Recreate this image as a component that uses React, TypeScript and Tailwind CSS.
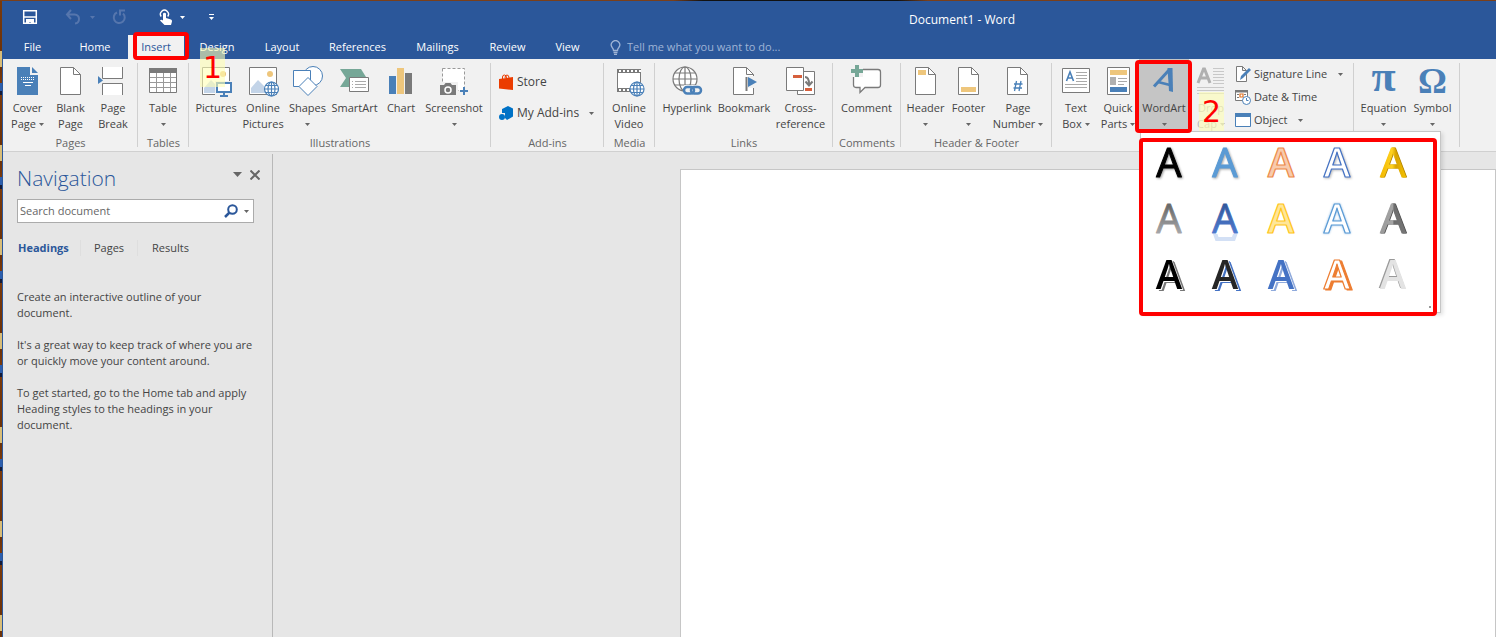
import type { ReactNode } from "react";

const BLUE = "#4a80b8";
const GRAY = "#7a7a7a";
const TAN = "#eec67c";
const GREEN = "#76a797";

function Caret({ className = "" }: Readonly<{ className?: string }>) {
  return (
    <svg viewBox="0 0 5 3" className={`inline-block h-[3px] w-[5px] shrink-0 ${className}`} aria-hidden="true">
      <path d="M0 0h5L2.5 3z" fill="currentColor" />
    </svg>
  );
}

function Icon({ children }: Readonly<{ children: ReactNode }>) {
  return (
    <svg viewBox="0 0 32 32" className="h-8 w-8 shrink-0" fill="none" aria-hidden="true">
      {children}
    </svg>
  );
}

function SmallIcon({ children }: Readonly<{ children: ReactNode }>) {
  return (
    <svg viewBox="0 0 16 16" className="h-4 w-4 shrink-0" fill="none" aria-hidden="true">
      {children}
    </svg>
  );
}

function Sheet({ children }: Readonly<{ children?: ReactNode }>) {
  return (
    <>
      <path d="M5.5 2.5h13l7 7v20h-20z" fill="#fff" stroke={GRAY} />
      <path d="M18.5 2.5v7h7" stroke={GRAY} />
      {children}
    </>
  );
}

function Globe({ cx, cy, r, color }: Readonly<{ cx: number; cy: number; r: number; color: string }>) {
  return (
    <g stroke={color} strokeWidth="1.2">
      <circle cx={cx} cy={cy} r={r} fill="#fff" />
      <ellipse cx={cx} cy={cy} rx={r / 2} ry={r} />
      <path d={`M${cx - r} ${cy}h${2 * r}M${cx} ${cy - r}v${2 * r}`} />
      <path d={`M${cx - r * 0.85} ${cy - r / 2}h${1.7 * r}M${cx - r * 0.85} ${cy + r / 2}h${1.7 * r}`} />
    </g>
  );
}

function Photo() {
  return (
    <>
      <path d="M2.5 2.5h27v27h-27z" fill="#fff" stroke={GRAY} />
      <circle cx="23" cy="9" r="3" fill={TAN} />
      <path d="M4 28v-5l7-8 5 5 3 3v5z" fill="#c3d4e8" />
    </>
  );
}

type RibbonButtonProps = {
  icon: ReactNode;
  lines: string[];
  width: string;
  caret?: boolean;
  disabled?: boolean;
};

function RibbonButton({ icon, lines, width, caret, disabled }: Readonly<RibbonButtonProps>) {
  return (
    <button
      type="button"
      disabled={disabled}
      className={`flex shrink-0 flex-col items-center whitespace-nowrap pt-1.5 leading-4 ${width} ${disabled ? "text-[#b5b5b5]" : "text-[#444]"}`}
    >
      {icon}
      <span className="mt-[3px] block">{lines[0]}</span>
      <span className="flex h-4 items-center gap-[3px]">
        {lines[1]}
        {caret && <Caret className={disabled ? "text-[#b5b5b5]" : "text-[#666]"} />}
      </span>
    </button>
  );
}

type GroupProps = {
  label: string;
  width: string;
  hideLabel?: boolean;
  children: ReactNode;
};

function Group({ label, width, hideLabel, children }: Readonly<GroupProps>) {
  return (
    <section
      aria-label={label}
      className={`relative flex shrink-0 flex-col after:absolute after:right-0 after:top-1 after:bottom-1 after:w-px after:bg-[#d0d0d0] ${width}`}
    >
      <div className="flex h-[76px] px-[3px]">{children}</div>
      {!hideLabel && <div className="h-4 text-center leading-4 text-[#666]">{label}</div>}
    </section>
  );
}

function Callout({ className, children }: Readonly<{ className: string; children: ReactNode }>) {
  return (
    <span
      className={`pointer-events-none absolute z-30 flex h-[39px] w-[25px] items-center justify-center bg-[#ffffb4]/60 font-['DejaVu_Sans',sans-serif] text-3xl text-[#f00] ${className}`}
    >
      {children}
    </span>
  );
}

const tabs = [
  { name: "File", width: "w-[59px]" },
  { name: "Home", width: "w-[66px]" },
  { name: "Insert", width: "w-[56px]" },
  { name: "Design", width: "w-[66px]" },
  { name: "Layout", width: "w-[64px]" },
  { name: "References", width: "w-[87px]" },
  { name: "Mailings", width: "w-[73px]" },
  { name: "Review", width: "w-[67px]" },
  { name: "View", width: "w-[53px]" },
];

function TitleBar() {
  return (
    <header className="flex h-[34px] items-center text-white">
      <div className="flex w-[260px] shrink-0 items-center pb-0.5 pl-[19px]">
        <button type="button" aria-label="Save">
          <SmallIcon>
            <path d="M1.7 1.7h12.6v12.6H1.7z" stroke="#fff" strokeWidth="1.5" />
            <path d="M2 8h12" stroke="#fff" strokeWidth="1.5" />
            <path d="M4 15v-5h8v5H9v-2H7v2z" fill="#fff" />
          </SmallIcon>
        </button>
        <button type="button" aria-label="Undo" className="ml-[27px] flex items-center gap-[9px] text-[#5676ad]">
          <SmallIcon>
            <path d="M6 1L2 5.5 6 10M2 5.5h7.5q4.5.5 4.5 4.500t-4 4.500" stroke="currentColor" strokeWidth="2" />
          </SmallIcon>
          <Caret />
        </button>
        <button type="button" aria-label="Repeat" className="ml-4 text-[#5676ad]">
          <SmallIcon>
            <path d="M6 3.5a5.5 5.5 0 1 0 6 1" stroke="currentColor" strokeWidth="2" />
            <path d="M9 6.5V1.5h5" stroke="currentColor" strokeWidth="2" />
          </SmallIcon>
        </button>
        <button type="button" aria-label="Touch/Mouse Mode" className="ml-[31px] flex items-center gap-[6px]">
          <SmallIcon>
            <path d="M3.2 7.5a4 4 0 1 1 6.5 0" stroke="#fff" strokeWidth="1.4" />
            <path d="M5 4.5q1.500-1.500 3 0V9l5 1.500q1.200.5 1 2L13 16H6.500L2 11.500q1-1.500 3 0z" fill="#fff" />
          </SmallIcon>
          <Caret />
        </button>
        <button type="button" aria-label="Customize Quick Access Toolbar" className="ml-6 flex flex-col items-center gap-0.5">
          <span className="h-px w-[5px] bg-white" />
          <Caret />
        </button>
      </div>
      <h1 className="ml-[646px] whitespace-nowrap pt-1 text-xs">Document1 - Word</h1>
    </header>
  );
}

function TabBar() {
  return (
    <nav className="flex h-6 items-stretch text-white" aria-label="Ribbon tabs">
      {tabs.map((tab) => {
        const active = tab.name === "Insert";
        return (
          <div key={tab.name} className={`relative flex shrink-0 ${tab.width}`}>
            <button type="button" className={`flex-1 ${active ? "bg-[#f1f1f1] text-[#2b579a]" : ""}`}>
              {tab.name}
            </button>
            {active && (
              <>
                <span className="pointer-events-none absolute -top-[3px] left-[5px] z-20 h-7 w-14 rounded-[4px] border-4 border-[#f00]" />
                <Callout className="left-[72px] top-[13px]">1</Callout>
              </>
            )}
          </div>
        );
      })}
      <label className="ml-4 flex items-center gap-1.5 text-[#9fb4d6]">
        <svg viewBox="0 0 11 15" className="h-[15px] w-[11px]" fill="none" stroke="currentColor" strokeWidth="1.3" aria-hidden="true">
          <path d="M3.5 10.5q0-1.500-1.300-3a4.200 4.200 0 1 1 6.600 0q-1.300 1.500-1.300 3zM3.500 12.500h4M4 14.300h3" />
        </svg>
        <input
          aria-label="Tell me what you want to do"
          placeholder="Tell me what you want to do..."
          className="w-[200px] bg-transparent outline-none placeholder:text-[#9fb4d6] placeholder:opacity-100"
        />
      </label>
    </nav>
  );
}

type LetterProps = {
  fill: string;
  stroke?: string;
  strokeWidth?: number;
  className?: string;
};

function LetterA({ className = "font-medium", ...rest }: Readonly<LetterProps>) {
  return (
    <text
      x={28}
      y={42}
      textAnchor="middle"
      strokeLinejoin="round"
      className={`font-['Open_Sans','Noto_Sans',sans-serif] text-[40px] ${className}`}
      {...rest}
    >
      A
    </text>
  );
}

const wordArtStyles: { name: string; art: ReactNode }[] = [
  {
    name: "Black, shadow",
    art: <LetterA fill="#000" stroke="#000" strokeWidth={1} className="font-medium [filter:drop-shadow(1px_1px_1px_#999)]" />,
  },
  {
    name: "Blue, shadow",
    art: <LetterA fill="#5b9bd5" stroke="#5b9bd5" strokeWidth={1} className="font-medium [filter:drop-shadow(1px_1px_1px_#aaa)]" />,
  },
  { name: "Orange fill, outline", art: <LetterA fill="#f8cbad" stroke="#ed8a4a" strokeWidth={1.2} className="font-semibold" /> },
  {
    name: "White, blue outline",
    art: <LetterA fill="#fff" stroke="#4472c4" strokeWidth={1.2} className="font-semibold [filter:drop-shadow(1px_1px_1px_#bbb)]" />,
  },
  {
    name: "Gold, bevel",
    art: <LetterA fill="url(#wa-gold)" stroke="url(#wa-gold)" strokeWidth={1} className="font-medium [filter:drop-shadow(1px_0_0_#b88900)]" />,
  },
  { name: "Gray gradient", art: <LetterA fill="url(#wa-gray)" stroke="url(#wa-gray)" strokeWidth={0.8} /> },
  {
    name: "Blue, reflection",
    art: (
      <>
        <LetterA fill="url(#wa-blue)" stroke="url(#wa-blue)" strokeWidth={0.8} />
        <path d="M16 43h4.5l1 3h13.500l1-3H40.500l-2.500 7H18.500z" fill="#d3e0f5" />
      </>
    ),
  },
  { name: "Gold fill, outline", art: <LetterA fill="#ffe699" stroke="#ffc61a" strokeWidth={1.2} className="font-semibold" /> },
  {
    name: "White, light blue outline",
    art: <LetterA fill="#fff" stroke="#5b9bd5" strokeWidth={1.2} className="font-semibold [filter:drop-shadow(0_0_1px_#9cc3e6)]" />,
  },
  {
    name: "Gray, bevel",
    art: <LetterA fill="url(#wa-bevel)" stroke="url(#wa-bevel)" strokeWidth={1} className="font-medium [filter:drop-shadow(1px_0_0_#555)]" />,
  },
  {
    name: "Black, hard shadow",
    art: <LetterA fill="#000" className="font-semibold [filter:drop-shadow(1px_1px_0_#fff)_drop-shadow(2px_1px_0_#777)]" />,
  },
  {
    name: "Black, blue shadow",
    art: <LetterA fill="#262626" className="font-semibold [filter:drop-shadow(1px_1px_0_#fff)_drop-shadow(2px_1px_0_#4472c4)]" />,
  },
  {
    name: "Blue, hard shadow",
    art: <LetterA fill="#4472c4" className="font-semibold [filter:drop-shadow(1px_1px_0_#fff)_drop-shadow(2px_1px_0_#8faadc)]" />,
  },
  {
    name: "White, orange shadow",
    art: <LetterA fill="#fff" stroke="#ed7d31" strokeWidth={1.2} className="font-semibold [filter:drop-shadow(2px_1px_0_#ed7d31)]" />,
  },
  { name: "Light gray, inner shadow", art: <LetterA fill="#e3e3e3" className="font-semibold [filter:drop-shadow(-1px_-1px_0_#999)]" /> },
];

function WordArtGallery() {
  return (
    <div className="absolute left-px top-[72px] z-10 h-[182px] w-[301px] border border-[#c6c6c6] bg-white pt-[3px] shadow-[2px_2px_4px_rgba(0,0,0,0.12)]">
      <svg className="absolute h-0 w-0" aria-hidden="true">
        <defs>
          <linearGradient id="wa-gray" x1="0" y1="0" x2="0" y2="1">
            <stop offset="0.3" stopColor="#6b6b6b" />
            <stop offset="0.9" stopColor="#b4b5b8" />
          </linearGradient>
          <linearGradient id="wa-blue" x1="0" y1="0" x2="0" y2="1">
            <stop offset="0.2" stopColor="#2f5597" />
            <stop offset="0.8" stopColor="#4f7bd0" />
          </linearGradient>
          <linearGradient id="wa-gold">
            <stop offset="0" stopColor="#f3b800" />
            <stop offset="0.45" stopColor="#ffd21f" />
            <stop offset="0.6" stopColor="#d9a300" />
            <stop offset="1" stopColor="#f7c400" />
          </linearGradient>
          <linearGradient id="wa-bevel">
            <stop offset="0" stopColor="#999" />
            <stop offset="0.48" stopColor="#a5a5a5" />
            <stop offset="0.52" stopColor="#6d6d6d" />
            <stop offset="1" stopColor="#777" />
          </linearGradient>
        </defs>
      </svg>
      <div className="grid w-[280px] grid-cols-5">
        {wordArtStyles.map((style) => (
          <button key={style.name} type="button" aria-label={style.name} className="h-14 w-14">
            <svg viewBox="0 0 56 56" className="h-14 w-14">
              {style.art}
            </svg>
          </button>
        ))}
      </div>
      <span className="absolute bottom-1 right-[9px] h-0.5 w-0.5 bg-[#999]" />
      <span className="pointer-events-none absolute -left-0.5 top-1.5 h-[178px] w-[298px] rounded-[4px] border-4 border-[#f00]" />
    </div>
  );
}

function PagesGroup() {
  return (
    <Group label="Pages" width="w-[135px]">
      <RibbonButton
        width="w-[43px]"
        lines={["Cover", "Page"]}
        caret
        icon={
          <Icon>
            <path d="M5 2h13v8h8v20H5z" fill={BLUE} />
            <path d="M20 2l6 6h-6z" fill={BLUE} />
            <path d="M9 12.5h14M9 14.5h14" stroke="#fff" strokeDasharray="1 1" />
            <path d="M11 17.5h10M13 20.5h6" stroke="#fff" />
          </Icon>
        }
      />
      <RibbonButton width="w-[43px]" lines={["Blank", "Page"]} icon={<Icon><Sheet /></Icon>} />
      <RibbonButton
        width="w-[42px]"
        lines={["Page", "Break"]}
        icon={
          <Icon>
            <path d="M5.5 2v11.5h20V2M5.5 30V18.5h20V30" fill="#fff" stroke={GRAY} />
            <path d="M1 11l5 4.5L1 19z" fill={BLUE} />
          </Icon>
        }
      />
    </Group>
  );
}

function IllustrationsGroup() {
  return (
    <Group label="Illustrations" width="w-[302px]">
      <RibbonButton
        width="w-[48px]"
        lines={["Pictures"]}
        icon={
          <Icon>
            <Photo />
            <path d="M15 16h17v14H15z" fill="#f1f1f1" />
            <path d="M17 18h14v9H17z" fill="#fff" stroke={BLUE} strokeWidth="2" />
            <path d="M24 27v4M20 31h8" stroke={BLUE} strokeWidth="2" />
          </Icon>
        }
      />
      <RibbonButton width="w-[46px]" lines={["Online", "Pictures"]} icon={<Icon><Photo /><Globe cx={24.5} cy={24} r={7} color={BLUE} /></Icon>} />
      <RibbonButton
        width="w-[43px]"
        lines={["Shapes"]}
        caret
        icon={
          <Icon>
            <circle cx="21" cy="11" r="9.5" fill="#fff" stroke={BLUE} />
            <path d="M1.5 5.5h17v16h-17z" fill="#fff" stroke={BLUE} />
            <path d="M16 12.5l9 9-9 9-9-9z" fill="#fff" stroke={BLUE} />
          </Icon>
        }
      />
      <RibbonButton
        width="w-[51px]"
        lines={["SmartArt"]}
        icon={
          <Icon>
            <path d="M1 4h21l5 8H11v10H1l6-9z" fill={GREEN} />
            <path d="M10.5 12.5h19v14h-19z" fill="#fff" stroke={GRAY} />
            <path d="M13 16.5h1m2 0h11M13 19.5h1m2 0h11M13 22.5h1m2 0h11" stroke="#aaa" />
          </Icon>
        }
      />
      <RibbonButton
        width="w-[42px]"
        lines={["Chart"]}
        icon={
          <Icon>
            <path d="M4 11h7v18H4z" fill={BLUE} />
            <path d="M12 3h7v26h-7z" fill={TAN} />
            <path d="M20 8h7v21h-7z" fill={GRAY} />
          </Icon>
        }
      />
      <RibbonButton
        width="w-[64px]"
        lines={["Screenshot"]}
        caret
        icon={
          <Icon>
            <path d="M4.5 3.5h22v22h-22z" fill="#fff" stroke="#999" strokeDasharray="3 2" />
            <path d="M1 17h19v13H1z" fill="#f1f1f1" />
            <path d="M2 20h4l1.500-2h5l1.500 2h4v10H2z" fill={GRAY} />
            <circle cx="10" cy="25" r="3" stroke="#fff" strokeWidth="1.5" />
            <path d="M26 22v8M22 26h8" stroke={BLUE} strokeWidth="2" />
          </Icon>
        }
      />
    </Group>
  );
}

function AddInsGroup() {
  return (
    <Group label="Add-ins" width="w-[113px]">
      <div className="flex flex-col gap-[15px] pl-[5px] pt-[15px] text-xs text-[#444]">
        <button type="button" className="flex items-center gap-0.5 leading-4">
          <SmallIcon>
            <path d="M0 5l14-2v13L0 14.5z" fill="#eb3c00" />
            <path d="M3.5 6V3q0-2 2-2t2 3M6 4q0-3 2-3t2 3" stroke="#eb3c00" />
          </SmallIcon>
          Store
        </button>
        <button type="button" className="flex items-center gap-0.5 whitespace-nowrap leading-4">
          <SmallIcon>
            <path d="M3 4l6-3 5 2.5v8L8 15l-2-2V8H3z" fill="#0072c6" />
            <circle cx="3" cy="12" r="3" fill="#0072c6" />
          </SmallIcon>
          My Add-ins
          <Caret className="ml-2 text-[#666]" />
        </button>
      </div>
    </Group>
  );
}

function LinksGroup() {
  return (
    <Group label="Links" width="w-[178px]">
      <RibbonButton
        width="w-[58px]"
        lines={["Hyperlink"]}
        icon={
          <Icon>
            <Globe cx={14} cy={14} r={12} color={GRAY} />
            <path d="M13 20h19v10H13z" fill="#f1f1f1" />
            <rect x="13" y="22" width="10" height="6.5" rx="3.2" stroke={BLUE} strokeWidth="2.5" />
            <rect x="20" y="22" width="10" height="6.5" rx="3.2" stroke={BLUE} strokeWidth="2.5" />
          </Icon>
        }
      />
      <RibbonButton
        width="w-[56px]"
        lines={["Bookmark"]}
        icon={
          <Icon>
            <Sheet />
            <path d="M20 11h11v12H20z" fill="#f1f1f1" />
            <path d="M18.5 12v14" stroke={GRAY} strokeWidth="2" />
            <path d="M20 12l9 5-9 5z" fill={BLUE} />
          </Icon>
        }
      />
      <RibbonButton
        width="w-[57px]"
        lines={["Cross-", "reference"]}
        icon={
          <Icon>
            <path d="M12.5 6.5h17v23h-17z" fill="#fff" stroke={GRAY} />
            <path d="M1.5 2.5h17v23h-17z" fill="#fff" stroke={GRAY} />
            <path d="M8 10h9v3H8zM20 23h7v3h-7z" fill="#d6603d" />
            <path d="M20 12q4 0 4 7M20.5 16.5l3.500 4 3.500-4" stroke={GRAY} strokeWidth="2" />
          </Icon>
        }
      />
    </Group>
  );
}

function HeaderFooterGroup() {
  return (
    <Group label="Header & Footer" width="w-[151px]">
      <RibbonButton width="w-[43px]" lines={["Header"]} caret icon={<Icon><Sheet><path d="M8 5h8v5H8z" fill={TAN} /></Sheet></Icon>} />
      <RibbonButton width="w-[43px]" lines={["Footer"]} caret icon={<Icon><Sheet><path d="M8 22h15v5H8z" fill={TAN} /></Sheet></Icon>} />
      <RibbonButton
        width="w-[56px]"
        lines={["Page", "Number"]}
        caret
        icon={<Icon><Sheet><path d="M14.5 16l-2 10M19 16l-2 10M12 19h8.500M11.500 23h8.500" stroke={BLUE} strokeWidth="1.3" /></Sheet></Icon>}
      />
    </Group>
  );
}

function TextGroup() {
  return (
    <Group label="Text" width="w-[302px]" hideLabel>
      <RibbonButton
        width="w-[42px]"
        lines={["Text", "Box"]}
        caret
        icon={
          <Icon>
            <path d="M2.5 3.5h27v24h-27z" fill="#fff" stroke={GRAY} />
            <path d="M6.5 16l3.500-9 3.500 9M8 13h4" stroke={BLUE} strokeWidth="1.6" />
            <path d="M16 7.5h11M16 10.5h11M16 13.5h11M16 16.5h11M5 19.5h22M5 22.5h22" stroke="#aaa" />
          </Icon>
        }
      />
      <RibbonButton
        width="w-[42px]"
        lines={["Quick", "Parts"]}
        caret
        icon={
          <Icon>
            <path d="M5.5 2.5h22v27h-22z" fill="#fff" stroke={GRAY} />
            <path d="M8 5h17v5H8z" fill={TAN} />
            <path d="M8 12h6v8H8z" fill="#b0b0b0" />
            <path d="M16 13.5h9M16 16.5h9M16 19.5h6" stroke="#aaa" />
            <path d="M8 22h17v5H8z" fill={BLUE} />
          </Icon>
        }
      />
      <div className="relative h-[72px] w-[50px] shrink-0 bg-[#c5c5c5]">
        <RibbonButton
          width="w-[50px]"
          lines={["WordArt"]}
          caret
          icon={
            <Icon>
              <path d="M6 21.5L21.500 4.500" stroke={BLUE} strokeWidth="3" />
              <path d="M19.500 3h5l.5 24-4-1z" fill={BLUE} />
              <path d="M10 17l12 3" stroke={BLUE} strokeWidth="2.5" />
            </Icon>
          }
        />
        <span className="pointer-events-none absolute -left-1 top-px z-20 h-[73px] w-[57px] rounded-[4px] border-4 border-[#f00]" />
        <WordArtGallery />
      </div>
      <div className="relative flex">
        <RibbonButton
          width="w-[44px]"
          lines={["Drop", "Cap"]}
          caret
          disabled
          icon={
            <Icon>
              <path d="M3 18L8.5 4h1L15 18M5 13h8" stroke="#b0b0b0" strokeWidth="3" />
              <path d="M18 3.5h11M18 6.5h11M18 9.5h11M18 12.5h11M18 15.5h11M18 18.5h11M2 22.5h27M2 25.5h27M2 28.5h27" stroke="#c8c8c8" />
            </Icon>
          }
        />
        <Callout className="left-[10px] top-[33px]">2</Callout>
      </div>
      <div className="flex flex-col items-start gap-[7px] whitespace-nowrap pl-0.5 pt-[7px] leading-4 text-[#444]">
        <button type="button" className="flex items-center gap-[3px]">
          <SmallIcon>
            <path d="M1.5.5h6l4 4v11h-10zM7.5.5v4h4" fill="#fff" stroke={GRAY} />
            <path d="M5 14l1-4 8-8 2 2-8 8z" fill={BLUE} />
          </SmallIcon>
          Signature Line
          <Caret className="ml-2 text-[#666]" />
        </button>
        <button type="button" className="flex items-center gap-[3px]">
          <SmallIcon>
            <path d="M.5 1.5h12v10H.5z" fill="#fff" stroke={GRAY} />
            <path d="M0 1h13v2.5H0z" fill={GRAY} />
            <path d="M2 5.5h2m5 0h2M2 8.5h2" stroke={GRAY} />
            <path d="M5 5h3v3H5z" stroke="#e07020" strokeWidth="1.2" />
            <circle cx="11.5" cy="11.5" r="4" fill="#fff" stroke={BLUE} />
            <path d="M11.5 9v2.5h2" stroke={BLUE} />
          </SmallIcon>
          Date &amp; Time
        </button>
        <button type="button" className="flex items-center gap-[3px]">
          <SmallIcon>
            <path d="M.5 1.5h15v13H.5z" fill="#fff" stroke={BLUE} />
            <path d="M0 1h16v4H0z" fill={BLUE} />
          </SmallIcon>
          Object
          <Caret className="ml-2 text-[#666]" />
        </button>
      </div>
    </Group>
  );
}

function Ribbon() {
  return (
    <div className="flex h-[93px] border-b border-[#d0d0d0] bg-[#f1f1f1]">
      <PagesGroup />
      <Group label="Tables" width="w-[51px]">
        <RibbonButton
          width="w-[44px]"
          lines={["Table"]}
          caret
          icon={
            <Icon>
              <path d="M2.5 3.5h27v24h-27z" fill="#fff" stroke={GRAY} />
              <path d="M2 3h28v5H2z" fill={GRAY} />
              <path d="M3 12.5h26M3 17.5h26M3 22.5h26M9.5 8v19M16.5 8v19M23.5 8v19" stroke="#999" />
            </Icon>
          }
        />
      </Group>
      <IllustrationsGroup />
      <AddInsGroup />
      <Group label="Media" width="w-[51px]">
        <RibbonButton
          width="w-[44px]"
          lines={["Online", "Video"]}
          icon={
            <Icon>
              <path d="M4 4h24v23H4z" fill={GRAY} />
              <path d="M5 8h22v15H5z" fill="#fff" />
              <path d="M6 6h22M6 25h22" stroke="#fff" strokeWidth="2" strokeDasharray="2 2" />
              <Globe cx={24} cy={24} r={7} color={BLUE} />
            </Icon>
          }
        />
      </Group>
      <LinksGroup />
      <Group label="Comments" width="w-[68px]">
        <RibbonButton
          width="w-[61px]"
          lines={["Comment"]}
          icon={
            <Icon>
              <path d="M6 4.5h21q2.500 0 2.500 2.500v13q0 2.500-2.500 2.500H14l-5 5v-5H5q-2.500 0-2.500-2.500V8z" fill="#fff" stroke={GRAY} strokeWidth="1.3" />
              <path d="M-1 0h13v12H-1z" fill="#f1f1f1" />
              <path d="M6 0v12M0 6h12" stroke={GREEN} strokeWidth="4" />
            </Icon>
          }
        />
      </Group>
      <HeaderFooterGroup />
      <TextGroup />
      <Group label="Symbols" width="w-[106px]" hideLabel>
        <RibbonButton
          width="w-[53px]"
          lines={["Equation"]}
          caret
          icon={<span className="h-8 font-['Liberation_Serif',serif] text-[44px] font-bold leading-6 text-[#4a80b8]">π</span>}
        />
        <RibbonButton
          width="w-[45px]"
          lines={["Symbol"]}
          caret
          icon={<span className="h-8 font-['Liberation_Serif',serif] text-4xl font-bold leading-8 text-[#4a80b8]">Ω</span>}
        />
      </Group>
    </div>
  );
}

function NavigationPane() {
  return (
    <aside className="mt-0.5 w-[270px] shrink-0 border-r border-[#b8b8b8] pl-3.5 pr-3 text-[#444]">
      <div className="flex h-[45px] items-center justify-between pt-1">
        <h2 className="text-[21px] font-light text-[#2b579a]">Navigation</h2>
        <div className="flex items-center gap-2 pb-2 text-[#666]">
          <button type="button" aria-label="Task pane options">
            <svg viewBox="0 0 9 5" className="h-[5px] w-[9px]">
              <path d="M0 0h9L4.5 5z" fill="currentColor" />
            </svg>
          </button>
          <button type="button" aria-label="Close">
            <svg viewBox="0 0 10 10" className="h-2.5 w-2.5" stroke="currentColor" strokeWidth="2">
              <path d="M.5.5l9 9M9.5.5l-9 9" />
            </svg>
          </button>
        </div>
      </div>
      <div className="mr-1.5 flex h-6 items-center border border-[#ababab] bg-white pl-0.5 pr-1">
        <input aria-label="Search document" placeholder="Search document" className="min-w-0 flex-1 bg-transparent outline-none placeholder:text-[#666] placeholder:opacity-100" />
        <button type="button" aria-label="Search" className="mr-1.5">
          <svg viewBox="0 0 14 14" className="h-3.5 w-3.5" fill="none" stroke="#2b579a" strokeWidth="2">
            <circle cx="8.5" cy="5.5" r="4.3" />
            <path d="M5.5 8.5L1 13" strokeWidth="2.5" />
          </svg>
        </button>
        <Caret className="text-[#666]" />
      </div>
      <div className="flex h-[50px] items-center">
        <button type="button" className="w-[64px] border-r border-[#dedede] pl-px text-left font-bold text-[#2b579a]">Headings</button>
        <button type="button" className="w-[57px] border-r border-[#dedede]">Pages</button>
        <button type="button" className="w-[65px]">Results</button>
      </div>
      <div className="flex flex-col gap-4 whitespace-nowrap pt-4 leading-4">
        <p>Create an interactive outline of your<br />document.</p>
        <p>It's a great way to keep track of where you are<br />or quickly move your content around.</p>
        <p>To get started, go to the Home tab and apply<br />Heading styles to the headings in your<br />document.</p>
      </div>
    </aside>
  );
}

export default function App() {
  return (
    <div className="flex min-h-screen overflow-hidden bg-[linear-gradient(90deg,#7a3f1a_0%,#7a3f1a_45%,#111_47%,#111_60%,#7a3f1a_62%)] pt-px font-['Open_Sans','Noto_Sans',sans-serif] text-[11px]">
      <div className="w-0.5 shrink-0 bg-[repeating-linear-gradient(180deg,#7a3a0c_0px,#6d3208_50px,#d9bd78_50px,#d9bd78_66px,#6d3208_66px,#7a3a0c_82px,#2d5fae_82px,#2d5fae_90px,#141b38_90px,#141b38_94px)]" />
      <div className="flex min-w-0 flex-1 flex-col border-l border-[#2b579a] bg-[#e6e6e6]">
        <div className="bg-[#2b579a]">
          <TitleBar />
          <TabBar />
        </div>
        <Ribbon />
        <main className="flex flex-1">
          <NavigationPane />
          <div className="flex flex-1 pl-[407px] pt-[17px]">
            <article aria-label="Document page" className="flex-1 border border-b-0 border-[#c6c6c6] bg-white" />
          </div>
        </main>
      </div>
    </div>
  );
}
